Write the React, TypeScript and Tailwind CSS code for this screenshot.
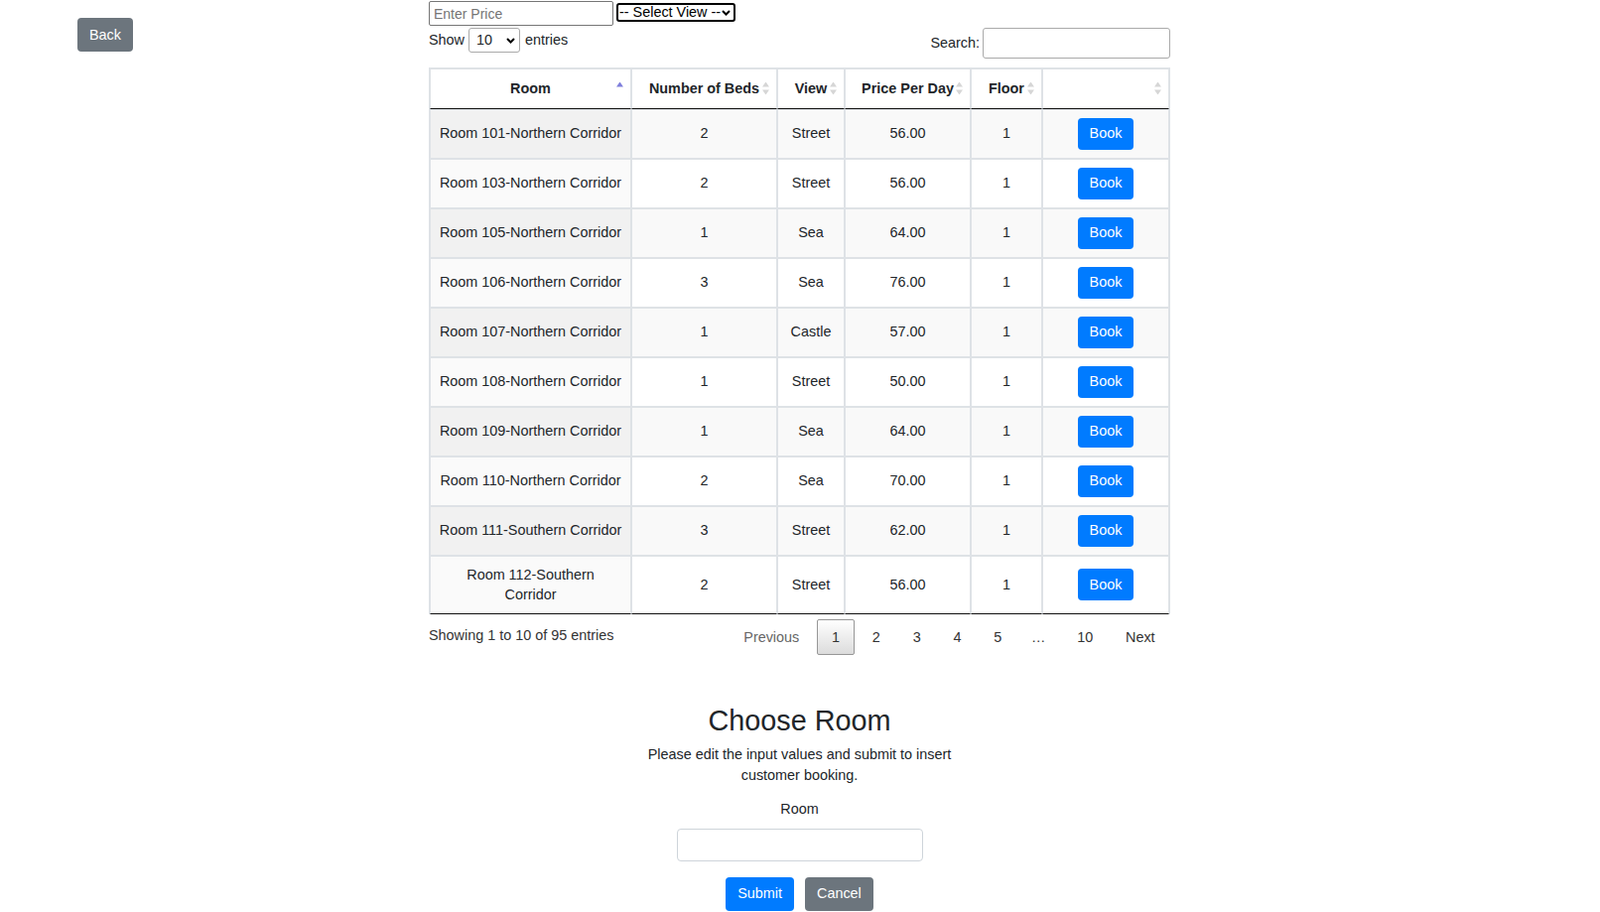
import { useState } from 'react'

const rooms = [
  { name: 'Room 101-Northern Corridor', beds: 2, view: 'Street', price: '56.00', floor: 1 },
  { name: 'Room 103-Northern Corridor', beds: 2, view: 'Street', price: '56.00', floor: 1 },
  { name: 'Room 105-Northern Corridor', beds: 1, view: 'Sea', price: '64.00', floor: 1 },
  { name: 'Room 106-Northern Corridor', beds: 3, view: 'Sea', price: '76.00', floor: 1 },
  { name: 'Room 107-Northern Corridor', beds: 1, view: 'Castle', price: '57.00', floor: 1 },
  { name: 'Room 108-Northern Corridor', beds: 1, view: 'Street', price: '50.00', floor: 1 },
  { name: 'Room 109-Northern Corridor', beds: 1, view: 'Sea', price: '64.00', floor: 1 },
  { name: 'Room 110-Northern Corridor', beds: 2, view: 'Sea', price: '70.00', floor: 1 },
  { name: 'Room 111-Southern Corridor', beds: 3, view: 'Street', price: '62.00', floor: 1 },
  { name: 'Room 112-Southern\nCorridor', beds: 2, view: 'Street', price: '56.00', floor: 1 },
]

function Chevron() {
  return (
    <svg width="9" height="6" viewBox="0 0 9 6" className="shrink-0">
      <path d="M1 1 L4.5 4.5 L8 1" stroke="#000" strokeWidth="2" fill="none" />
    </svg>
  )
}

function SortIcon({ asc }: { asc?: boolean }) {
  return (
    <svg width="7" height="13" viewBox="0 0 7 13" className="absolute right-[7px] top-1/2 -translate-y-1/2">
      <polygon points="3.5,0 7,5 0,5" fill={asc ? '#7f7fdc' : '#d6d6d6'} />
      {!asc && <polygon points="0,8 7,8 3.5,13" fill="#d6d6d6" />}
    </svg>
  )
}

export default function App() {
  const [roomValue, setRoomValue] = useState('')
  const [search, setSearch] = useState('')
  const [price, setPrice] = useState('')

  const headers = [
    { label: 'Room', w: 'w-[203px]', asc: true },
    { label: 'Number of Beds', w: 'w-[147px]' },
    { label: 'View', w: 'w-[68px]' },
    { label: 'Price Per Day', w: 'w-[127px]' },
    { label: 'Floor', w: 'w-[72px]' },
    { label: '', w: 'w-[128px]' },
  ]

  return (
    <div className="w-full h-[919px] overflow-hidden bg-white text-[#212529] font-['Liberation_Sans',Arial,sans-serif] text-[14.4px] leading-[1.43]">
      <div className="grid grid-cols-[432px_747px_1fr]">
        <div className="pl-[78px] pt-[18px]">
          <button className="h-[34px] px-[12px] rounded-[4px] bg-[#6c757d] text-white">Back</button>
        </div>

        <div>
          {/* filters */}
          <div className="flex items-start h-[27px]">
            <input
              className="mt-[1px] w-[186px] h-[25px] border border-[#767676] rounded-[2px] px-[4px] text-[14px] placeholder:text-[#757575] outline-none"
              placeholder="Enter Price"
              value={price}
              onChange={(e) => setPrice(e.target.value)}
            />
            <div className="ml-[3px] mt-[3px] w-[120px] h-[19px] border-2 border-black rounded-[3px] flex items-center justify-between pl-[1px] pr-[3px] text-black leading-none">
              <span>-- Select View --</span>
              <Chevron />
            </div>
          </div>

          <div className="flex justify-between items-start h-[32px]">
            <div className="flex items-center mt-[1px] h-[25px]">
              <span>Show</span>
              <div className="ml-[4px] mr-[5px] w-[52px] h-[25px] border border-[#aaa] rounded-[3px] pl-[7px] pr-[4px] flex items-center justify-between">
                <span>10</span>
                <Chevron />
              </div>
              <span>entries</span>
            </div>
            <div className="flex items-center gap-[3px] mt-[1px]">
              <span>Search:</span>
              <input
                className="w-[189px] h-[31px] border border-[#aaa] rounded-[3px] px-[4px] outline-none"
                value={search}
                onChange={(e) => setSearch(e.target.value)}
              />
            </div>
          </div>

          {/* table */}
          <table className="mt-[9px] w-[747px] table-fixed border-separate border-spacing-0 border border-b-0 border-[#dee2e6]">
            <thead>
              <tr>
                {headers.map((h, i) => (
                  <th
                    key={i}
                    className={`${h.w} relative px-[10px] py-[9px] text-center font-bold border border-[#dee2e6] border-b-[#111]`}
                  >
                    {h.label}
                    <SortIcon asc={h.asc} />
                  </th>
                ))}
              </tr>
            </thead>
            <tbody>
              {rooms.map((r, i) => {
                const odd = i % 2 === 0
                const last = i === rooms.length - 1
                const cell = `px-[10px] py-[8px] text-center align-middle border border-[#dee2e6] ${last ? 'border-b-[#111]' : ''} ${odd ? 'bg-[#f9f9f9]' : 'bg-white'}`
                return (
                  <tr key={r.name}>
                    <td className={`px-[4px] py-[8px] text-center align-middle border border-[#dee2e6] whitespace-pre ${last ? 'border-b-[#111]' : ''} ${odd ? 'bg-[#f1f1f1]' : 'bg-[#fafafa]'}`}>
                      {r.name}
                    </td>
                    <td className={cell}>{r.beds}</td>
                    <td className={cell}>{r.view}</td>
                    <td className={cell}>{r.price}</td>
                    <td className={cell}>{r.floor}</td>
                    <td className={cell}>
                      <button className="h-[32px] px-[12px] rounded-[4px] bg-[#007bff] text-white">Book</button>
                    </td>
                  </tr>
                )
              })}
            </tbody>
          </table>

          {/* info + pagination */}
          <div className="flex justify-between items-start text-[#333]">
            <div className="pt-[11px]">Showing 1 to 10 of 95 entries</div>
            <div className="pt-[5px] flex items-center">
              <span className="px-[14.4px] py-[7px] border border-transparent text-[#666]">Previous</span>
              <span className="ml-[2px] px-[14.4px] py-[7px] border border-[#979797] rounded-[2px] bg-linear-to-b from-white to-[#dcdcdc]">1</span>
              {['2', '3', '4', '5'].map((p) => (
                <span key={p} className="ml-[2px] px-[14.4px] py-[7px] border border-transparent">{p}</span>
              ))}
              <span className="px-[14.4px] py-[7px]">…</span>
              <span className="ml-[2px] px-[14.4px] py-[7px] border border-transparent">10</span>
              <span className="ml-[2px] px-[14.4px] py-[7px] border border-transparent">Next</span>
            </div>
          </div>

          {/* form */}
          <div className="mt-[49px] flex flex-col items-center text-center">
            <h3 className="text-[28.8px] leading-[1.2] mb-[6px]">Choose Room</h3>
            <p className="max-w-[340px] mb-[14px]">Please edit the input values and submit to insert customer booking.</p>
            <label className="mb-[9px]">Room</label>
            <input
              className="w-[248px] h-[33px] border border-[#ced4da] rounded-[4px] px-[12px] outline-none"
              value={roomValue}
              onChange={(e) => setRoomValue(e.target.value)}
            />
            <div className="mt-[16px] flex gap-[11px]">
              <button className="h-[34px] px-[12px] rounded-[4px] bg-[#007bff] text-white">Submit</button>
              <button className="h-[34px] px-[12px] rounded-[4px] bg-[#6c757d] text-white">Cancel</button>
            </div>
          </div>
        </div>

        <div />
      </div>
    </div>
  )
}
